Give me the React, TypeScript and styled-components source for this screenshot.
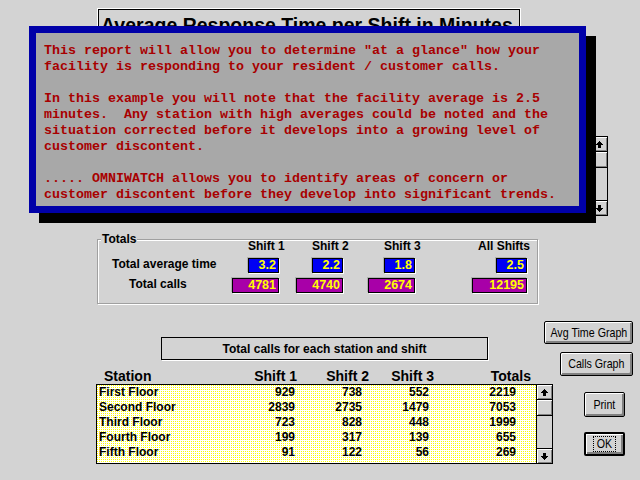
import React from 'react';
import styled, { createGlobalStyle } from 'styled-components';

const GlobalStyle = createGlobalStyle`
  html, body {
    margin: 0;
    padding: 0;
    background: #d3d3d3;
  }
  body {
    font-family: "Liberation Sans", Arial, sans-serif;
  }
`;

const Screen = styled.div`
  position: relative;
  width: 640px;
  height: 480px;
  overflow: hidden;
  background: #d3d3d3;
  color: #000;
`;

const TopSection = styled.div`
  padding-top: 9px;
`;

const ReportTitle = styled.div`
  margin-left: 98px;
  width: 422px;
  height: 28px;
  box-sizing: border-box;
  border: 1px solid #000;
  box-shadow: 0 0 0 1px #fff;
  padding: 4px 0 0 2px;
  overflow: hidden;
  white-space: nowrap;
  font-size: 19.5px;
  font-weight: bold;
  line-height: 22px;
`;

const HiddenList = styled.div`
  display: flex;
  margin: 99px 0 0 40px;
  width: 568px;
  height: 80px;
  box-sizing: border-box;
  border: 1px solid #000;
  background: #fff;
`;

const ListBody = styled.div`
  flex: 1;
  background-color: #fff;
  background-image: conic-gradient(from 90deg at 1px 1px, #fff 0 50%, #ffff00 0 75%, #fff 0);
  background-size: 2px 2px;
`;

const ScrollBar = styled.div`
  display: flex;
  flex-direction: column;
  width: 16px;
  box-sizing: border-box;
  border-left: 1px solid #000;
  background: #d3d3d3;
`;

const ScrollButton = styled.div<{ $top?: boolean }>`
  display: flex;
  align-items: center;
  justify-content: center;
  height: 15px;
  box-sizing: border-box;
  ${({ $top }) => ($top ? 'border-bottom: 1px solid #000;' : 'border-top: 1px solid #000;')}
  box-shadow: inset 1px 1px 0 #fff, inset -1px -1px 0 #808080;
  background: #d3d3d3;
`;

const ScrollThumb = styled.div`
  height: 16px;
  box-sizing: border-box;
  border-bottom: 1px solid #000;
  box-shadow: inset 1px 1px 0 #fff, inset -1px -1px 0 #808080;
  background: #d3d3d3;
`;

const ScrollTrack = styled.div`
  flex: 1;
`;

const Arrow = ({ down }: { down?: boolean }) => (
  <svg
    width="7"
    height="7"
    viewBox="0 0 7 7"
    shapeRendering="crispEdges"
    style={down ? { transform: 'rotate(180deg)' } : undefined}
  >
    <polygon points="3.5,0 7,4 5,4 5,7 2,7 2,4 0,4" fill="#000" />
  </svg>
);

function Scroller() {
  return (
    <ScrollBar>
      <ScrollButton $top>
        <Arrow />
      </ScrollButton>
      <ScrollThumb />
      <ScrollTrack />
      <ScrollButton>
        <Arrow down />
      </ScrollButton>
    </ScrollBar>
  );
}

const Notice = styled.div`
  position: absolute;
  left: 29px;
  top: 26px;
  width: 557px;
  height: 187px;
  box-sizing: border-box;
  border: 7px solid #0000a8;
  background: #a8a8a8;
  box-shadow: 10px 10px 0 #000;
  padding: 10px 0 0 8px;
  font-family: "Liberation Mono", "Courier New", monospace;
  font-size: 13.33px;
  font-weight: bold;
  line-height: 16px;
  color: #a80000;
  white-space: pre;
`;

const TotalsGroup = styled.div`
  position: relative;
  margin: 23px 0 0 97px;
  width: 441px;
  height: 65px;
  box-sizing: border-box;
  border: 1px solid #a0a0a0;
  box-shadow: inset 1px 1px 0 #fff, 1px 1px 0 #fff;
  display: grid;
  grid-template-columns: 132px 50px 64px 72px 112px;
  grid-template-rows: 13px 16px 16px;
  row-gap: 4px;
  align-items: center;
  font-size: 12px;
  font-weight: bold;
`;

const GroupLabel = styled.span`
  position: absolute;
  left: 3px;
  top: -8px;
  padding: 0 1px;
  background: #d3d3d3;
  line-height: 14px;
  font-size: 12px;
  font-weight: bold;
`;

const ColumnHead = styled.div<{ $wide?: boolean }>`
  justify-self: end;
  white-space: nowrap;
  line-height: 13px;
  ${({ $wide }) => ($wide ? 'margin-right: -2px;' : 'width: 31px; margin-right: 1px;')}
`;

const RowLabel = styled.div<{ $indent: number }>`
  padding-left: ${({ $indent }) => $indent}px;
  white-space: nowrap;
  margin-top: -2px;
`;

const ValueBox = styled.div<{ $tone: 'time' | 'calls'; $width: number }>`
  justify-self: end;
  margin-right: 1px;
  width: ${({ $width }) => $width}px;
  height: 15px;
  box-sizing: border-box;
  border: 1px solid #000;
  box-shadow: -1px -1px 0 #b0b0b0, 1px 1px 0 #fff;
  background: ${({ $tone }) => ($tone === 'time' ? '#0000f4' : '#a800a8')};
  color: #ffff00;
  text-align: right;
  padding-right: 2px;
  font-size: 12.5px;
  line-height: 13px;
`;

const BottomSection = styled.div`
  display: flex;
`;

const TableColumn = styled.div`
  margin-left: 96px;
  width: 457px;
`;

const CallsTitle = styled.div`
  margin: 33px 0 0 65px;
  width: 327px;
  height: 23px;
  box-sizing: border-box;
  border: 1px solid #000;
  box-shadow: 1px 1px 0 #fff;
  display: flex;
  align-items: center;
  justify-content: center;
  font-size: 12px;
  font-weight: bold;
`;

const HeadRow = styled.div`
  display: grid;
  grid-template-columns: 104px 97px 72px 65px 97px;
  margin-top: 9px;
  height: 15px;
  font-size: 14px;
  font-weight: bold;
  line-height: 15px;
`;

const HeadCell = styled.div<{ $left?: boolean }>`
  text-align: ${({ $left }) => ($left ? 'left' : 'right')};
  padding-left: ${({ $left }) => ($left ? '8px' : '0')};
`;

const StationList = styled.div`
  display: flex;
  height: 80px;
  box-sizing: border-box;
  border: 1px solid #000;
`;

const StationRow = styled.div`
  display: grid;
  grid-template-columns: 98px 98px 67px 67px 87px;
  padding-left: 2px;
  height: 15px;
  font-size: 12px;
  font-weight: bold;
  line-height: 15px;
`;

const Cell = styled.div<{ $left?: boolean }>`
  text-align: ${({ $left }) => ($left ? 'left' : 'right')};
  white-space: nowrap;
`;

const ButtonColumn = styled.div`
  display: flex;
  flex-direction: column;
  align-items: flex-end;
  margin-left: -9px;
  width: 89px;
  padding-top: 17px;
`;

const WinButton = styled.button<{ $w: number; $h: number; $gap: number; $inset?: number; $default?: boolean }>`
  width: ${({ $w }) => $w}px;
  height: ${({ $h }) => $h}px;
  margin: ${({ $gap }) => $gap}px ${({ $inset }) => $inset || 0}px 0 0;
  padding: 0;
  box-sizing: border-box;
  border: ${({ $default }) => ($default ? 2 : 1)}px solid #000;
  border-radius: 2px;
  background: #d3d3d3;
  box-shadow: inset 1px 1px 0 #fff, inset -2px -2px 0 #808080;
  font-family: "Liberation Sans", Arial, sans-serif;
  font-size: 13px;
  color: #000;
  display: flex;
  align-items: center;
  justify-content: center;
  overflow: visible;
`;

// the dialog font is a narrow sans; squeeze Liberation Sans to its width
const ButtonText = styled.span`
  display: inline-block;
  white-space: nowrap;
  transform: scaleX(0.82);
  line-height: 14px;
`;

const FocusRing = styled.span`
  border: 1px dotted #000;
  padding: 0 1px;
  line-height: 13px;
`;

const stations = [
  { name: 'First Floor', s1: 929, s2: 738, s3: 552, total: 2219 },
  { name: 'Second Floor', s1: 2839, s2: 2735, s3: 1479, total: 7053 },
  { name: 'Third Floor', s1: 723, s2: 828, s3: 448, total: 1999 },
  { name: 'Fourth Floor', s1: 199, s2: 317, s3: 139, total: 655 },
  { name: 'Fifth Floor', s1: 91, s2: 122, s3: 56, total: 269 }
];

const noticeText = `This report will allow you to determine "at a glance" how your
facility is responding to your resident / customer calls.

In this example you will note that the facility average is 2.5
minutes.  Any station with high averages could be noted and the
situation corrected before it develops into a growing level of
customer discontent.

..... OMNIWATCH allows you to identify areas of concern or
customer discontent before they develop into significant trends.`;

export default function App() {
  return (
    <Screen>
      <GlobalStyle />
      <TopSection>
        <ReportTitle>Average Response Time per Shift in Minutes</ReportTitle>
        <HiddenList>
          <ListBody />
          <Scroller />
        </HiddenList>
      </TopSection>

      <TotalsGroup>
        <GroupLabel>Totals</GroupLabel>
        <div />
        <ColumnHead>Shift 1</ColumnHead>
        <ColumnHead>Shift 2</ColumnHead>
        <ColumnHead>Shift 3</ColumnHead>
        <ColumnHead $wide>All Shifts</ColumnHead>

        <RowLabel $indent={14}>Total average time</RowLabel>
        <ValueBox $tone="time" $width={31}>3.2</ValueBox>
        <ValueBox $tone="time" $width={31}>2.2</ValueBox>
        <ValueBox $tone="time" $width={31}>1.8</ValueBox>
        <ValueBox $tone="time" $width={31}>2.5</ValueBox>

        <RowLabel $indent={31}>Total calls</RowLabel>
        <ValueBox $tone="calls" $width={47}>4781</ValueBox>
        <ValueBox $tone="calls" $width={47}>4740</ValueBox>
        <ValueBox $tone="calls" $width={47}>2674</ValueBox>
        <ValueBox $tone="calls" $width={55}>12195</ValueBox>
      </TotalsGroup>

      <BottomSection>
        <TableColumn>
          <CallsTitle>Total calls for each station and shift</CallsTitle>
          <HeadRow>
            <HeadCell $left>Station</HeadCell>
            <HeadCell>Shift 1</HeadCell>
            <HeadCell>Shift 2</HeadCell>
            <HeadCell>Shift 3</HeadCell>
            <HeadCell>Totals</HeadCell>
          </HeadRow>
          <StationList>
            <ListBody>
              {stations.map((s) => (
                <StationRow key={s.name}>
                  <Cell $left>{s.name}</Cell>
                  <Cell>{s.s1}</Cell>
                  <Cell>{s.s2}</Cell>
                  <Cell>{s.s3}</Cell>
                  <Cell>{s.total}</Cell>
                </StationRow>
              ))}
            </ListBody>
            <Scroller />
          </StationList>
        </TableColumn>

        <ButtonColumn>
          <WinButton $w={89} $h={23} $gap={0}>
            <ButtonText>Avg Time Graph</ButtonText>
          </WinButton>
          <WinButton $w={73} $h={24} $gap={8}>
            <ButtonText>Calls Graph</ButtonText>
          </WinButton>
          <WinButton $w={41} $h={25} $gap={16} $inset={8}>
            <ButtonText>Print</ButtonText>
          </WinButton>
          <WinButton $w={41} $h={24} $gap={15} $inset={8} $default>
            <FocusRing>
              <ButtonText>OK</ButtonText>
            </FocusRing>
          </WinButton>
        </ButtonColumn>
      </BottomSection>

      <Notice>{noticeText}</Notice>
    </Screen>
  );
}
